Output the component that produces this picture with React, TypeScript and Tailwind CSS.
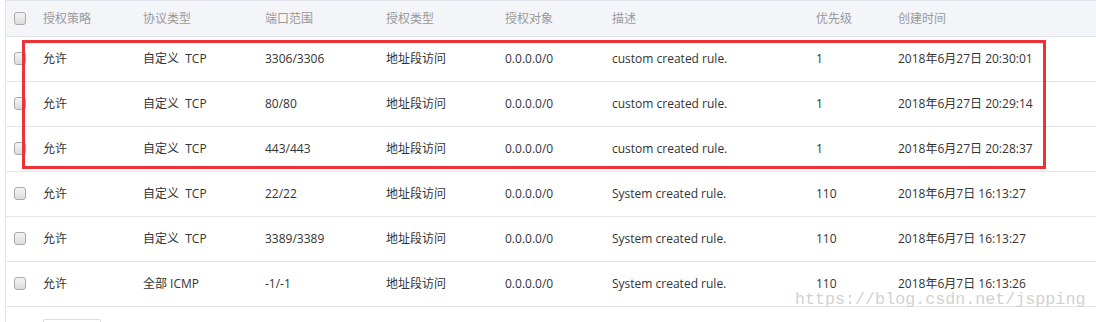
import React from "react";

const cols = [
  "w-[100px]",
  "w-[122px]",
  "w-[121px]",
  "w-[119px]",
  "w-[107px]",
  "w-[204px]",
  "w-[82px]",
  "flex-1",
];

const headers = ["授权策略", "协议类型", "端口范围", "授权类型", "授权对象", "描述", "优先级", "创建时间"];

const rows = [
  ["允许", "自定义\u00a0 TCP", "3306/3306", "地址段访问", "0.0.0.0/0", "custom created rule.", "1", "2018年6月27日 20:30:01"],
  ["允许", "自定义\u00a0 TCP", "80/80", "地址段访问", "0.0.0.0/0", "custom created rule.", "1", "2018年6月27日 20:29:14"],
  ["允许", "自定义\u00a0 TCP", "443/443", "地址段访问", "0.0.0.0/0", "custom created rule.", "1", "2018年6月27日 20:28:37"],
  ["允许", "自定义\u00a0 TCP", "22/22", "地址段访问", "0.0.0.0/0", "System created rule.", "110", "2018年6月7日 16:13:27"],
  ["允许", "自定义\u00a0 TCP", "3389/3389", "地址段访问", "0.0.0.0/0", "System created rule.", "110", "2018年6月7日 16:13:27"],
  ["允许", "全部 ICMP", "-1/-1", "地址段访问", "0.0.0.0/0", "System created rule.", "110", "2018年6月7日 16:13:26"],
];

function Checkbox() {
  return (
    <div className="w-[12px] h-[13px] rounded-[3px] border border-[#a9a9a9] bg-gradient-to-b from-[#f4f4f4] to-[#dcdcdc]" />
  );
}

export default function App() {
  return (
    <div
      className="relative w-[1096px] h-[322px] bg-white overflow-hidden text-[12px]"
      style={{ fontFamily: '"Open Sans", "Noto Sans CJK SC", sans-serif' }}
    >
      <div className="ml-[5px] border-l border-[#e3e5ea] h-full">
        <div className="flex items-center h-[37px] bg-[#f4f5f9] border-t border-b border-[#e1e4ea] text-[#999]">
          <div className="w-[37px] pl-[8px] -mt-[1px]">
            <Checkbox />
          </div>
          {headers.map((h, i) => (
            <div key={i} className={`${cols[i]} whitespace-nowrap`}>
              {h}
            </div>
          ))}
        </div>
        {rows.map((r, ri) => (
          <div key={ri} className="flex items-center h-[45px] border-b border-[#e4e6eb] text-[#333]">
            <div className="w-[37px] pl-[8px] -mt-[2px]">
              <Checkbox />
            </div>
            {r.map((c, i) => (
              <div key={i} className={`${cols[i]} whitespace-nowrap`}>
                {c}
              </div>
            ))}
          </div>
        ))}
        <div className="ml-[37px] mt-[12px] w-[58px] h-[20px] border border-[#dcdcdc] rounded-[2px] bg-white" />
      </div>
      <div className="absolute left-[22px] top-[40px] w-[1024px] h-[129px] border-[3px] border-[#ec3237]" />
      <div
        className="absolute left-[795px] top-[292px] text-[16.7px] text-[#d2d2d2] leading-none"
        style={{ fontFamily: '"Liberation Mono", monospace' }}
      >
        https://blog.csdn.net/jspping
      </div>
    </div>
  );
}
